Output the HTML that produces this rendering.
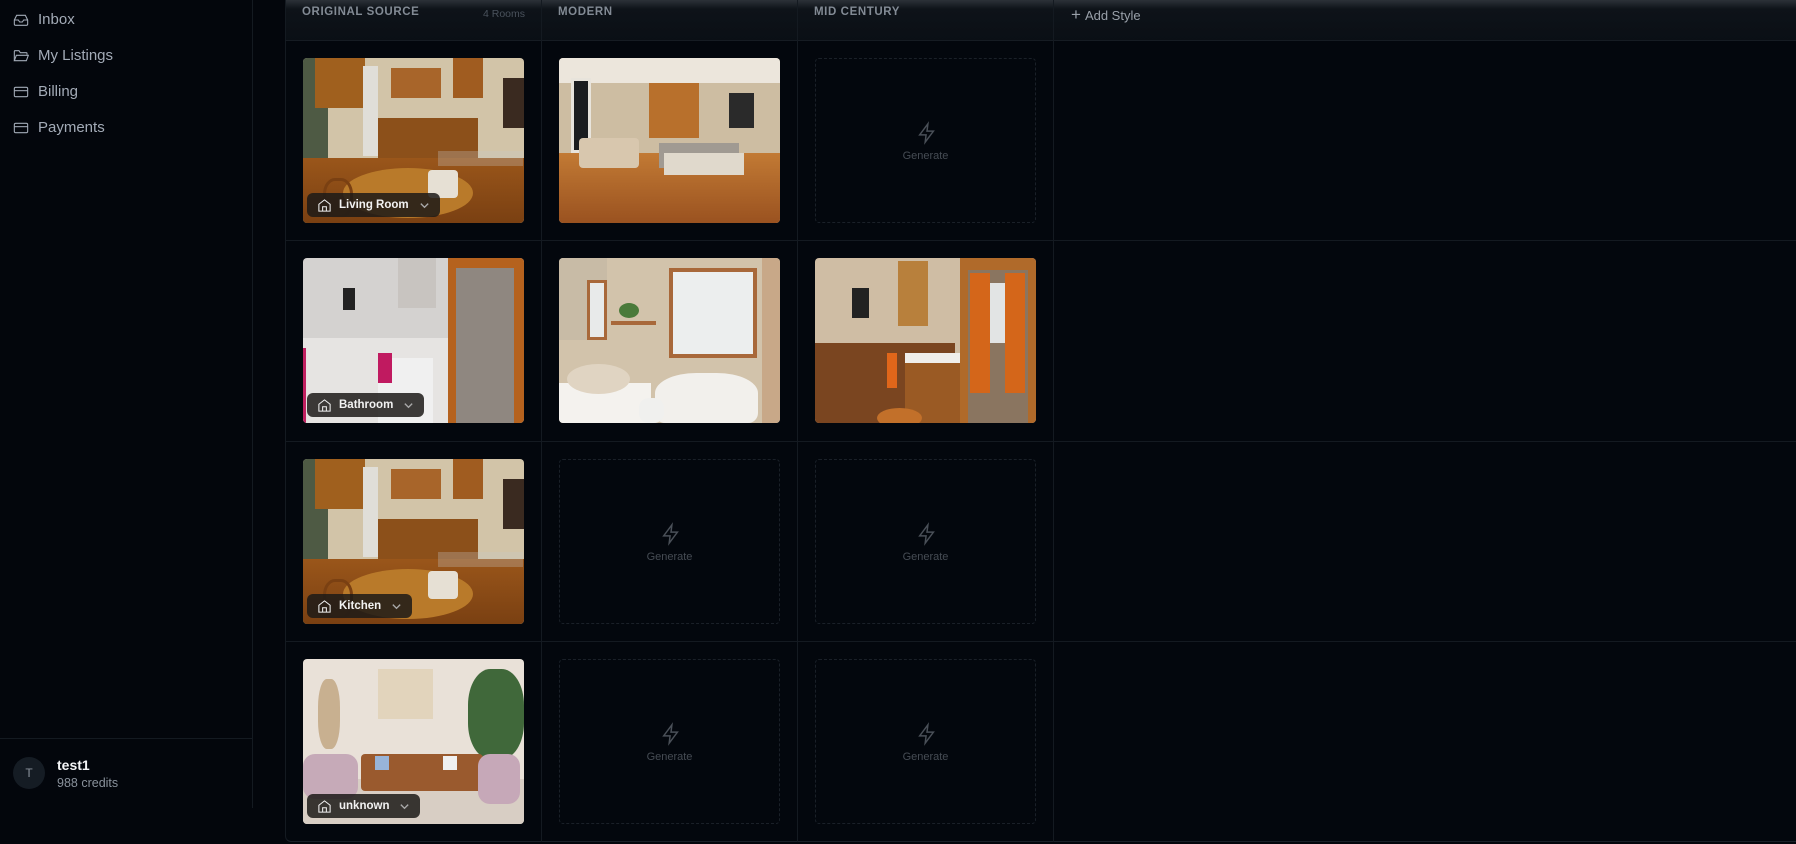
<!DOCTYPE html>
<html><head><meta charset="utf-8"><style>
*{box-sizing:border-box;margin:0;padding:0}
body{width:1796px;height:844px;background:#03060c;font-family:"Liberation Sans",sans-serif;position:relative;overflow:hidden}
.a{position:absolute}
.nav{position:absolute;left:13px;display:flex;align-items:center;color:#a3abb7;font-size:15px}
.nav svg{width:16px;height:16px;margin-right:9px;stroke:#a3abb7;fill:none;stroke-width:1.6}
.hd{position:absolute;top:6px;font-size:11.5px;font-weight:bold;letter-spacing:0.6px;color:#838b95}
.vl{position:absolute;top:0;width:1px;height:842px;background:#141a21}
.hl{position:absolute;left:285px;width:1511px;height:1px;background:#141a21}
.img{position:absolute;width:221px;height:165px;border-radius:4px;overflow:hidden}
.img div{position:absolute}
.box{position:absolute;width:221px;height:165px;border:1px dashed #1a2028;border-radius:4px}
.box svg{position:absolute;left:100px;top:62px;width:22px;height:24px;fill:none;stroke:#4a5058;stroke-width:1.6}
.box span{position:absolute;left:0;width:100%;top:91px;text-align:center;font-size:11px;color:#464c54}
.badge{position:absolute;left:4px;bottom:6px;height:24px;background:rgba(28,26,24,.85);border-radius:6px;display:flex;align-items:center;padding:0 10px 0 10px;color:#f2f2f2;font-size:11.5px;font-weight:bold}
.badge svg.h{width:15px;height:15px;stroke:#eee;fill:none;stroke-width:1.7;margin-right:7px}
.badge svg.c{width:11px;height:11px;stroke:#aaa;fill:none;stroke-width:1.5;margin-left:10px}
</style></head><body>

<div class="a" style="left:252px;top:0;width:1px;height:808px;background:#141a21"></div>
<div class="nav" style="top:11px"><svg viewBox="0 0 24 24"><path d="M22 12h-6l-2 3h-4l-2-3H2"/><path d="M5.5 5h13L22 12v6a2 2 0 0 1-2 2H4a2 2 0 0 1-2-2v-6z"/></svg>Inbox</div>
<div class="nav" style="top:47px"><svg viewBox="0 0 24 24"><path d="M2 19V5a1 1 0 0 1 1-1h6l2 3h9a1 1 0 0 1 1 1v2"/><path d="M2 19l3-8h18l-3 8z"/></svg>My Listings</div>
<div class="nav" style="top:83px"><svg viewBox="0 0 24 24"><rect x="2" y="5" width="20" height="14" rx="2"/><path d="M2 10h20"/></svg>Billing</div>
<div class="nav" style="top:119px"><svg viewBox="0 0 24 24"><rect x="2" y="5" width="20" height="14" rx="2"/><path d="M2 10h20"/></svg>Payments</div>
<div class="a" style="left:0;top:738px;width:252px;height:1px;background:#141a21"></div>
<div class="a" style="left:13px;top:757px;width:32px;height:32px;border-radius:50%;background:#151c24;color:#8a929c;font-size:12px;text-align:center;line-height:32px">T</div>
<div class="a" style="left:57px;top:757px;font-size:14px;font-weight:bold;color:#f4f5f7">test1</div>
<div class="a" style="left:57px;top:776px;font-size:12.5px;color:#8a929c">988 credits</div>

<div class="a" style="left:285px;top:0;width:1511px;height:842px;background:#03070d;border-left:1px solid #141a21;border-bottom:1px solid #1a2129;border-radius:0 0 0 6px"></div>
<div class="a" style="left:286px;top:0;width:1510px;height:41px;background:linear-gradient(#2c3138,#0e1319 9px,#0a0f15)"></div>
<div class="hl" style="top:40px;background:#161c23"></div>
<div class="hl" style="top:240px"></div>
<div class="hl" style="top:441px"></div>
<div class="hl" style="top:641px"></div>
<div class="vl" style="left:541px"></div>
<div class="vl" style="left:797px"></div>
<div class="vl" style="left:1053px"></div>
<div class="hd" style="left:302px">ORIGINAL SOURCE</div>
<div class="a" style="left:470px;top:8px;font-size:10.5px;color:#4a525c;width:55px;text-align:right">4 Rooms</div>
<div class="hd" style="left:558px">MODERN</div>
<div class="hd" style="left:814px">MID CENTURY</div>
<div class="a" style="left:1071px;top:5px;font-size:13px;color:#99a0a9;display:flex;align-items:center"><span style="font-size:17px;margin-right:4px;font-weight:normal">+</span>Add Style</div>

<div class="img" style="left:303px;top:58px;background:#d2c4a8">
 <div style="left:0;top:0;width:25px;height:165px;background:#4e5a44"></div>
 <div style="left:12px;top:0;width:50px;height:50px;background:#a0601e"></div>
 <div style="left:60px;top:8px;width:15px;height:90px;background:#e0ded8"></div>
 <div style="left:88px;top:10px;width:50px;height:30px;background:#a8652a"></div>
 <div style="left:150px;top:0;width:30px;height:40px;background:#a05c20"></div>
 <div style="left:75px;top:60px;width:100px;height:40px;background:#8c501a"></div>
 <div style="left:200px;top:20px;width:21px;height:50px;background:#3a2a20"></div>
 <div style="left:0;top:100px;width:221px;height:65px;background:linear-gradient(#9a561a,#7a4012)"></div>
 <div style="left:40px;top:110px;width:130px;height:50px;border-radius:50%;background:#b97a2a"></div>
 <div style="left:20px;top:120px;width:30px;height:40px;border-radius:40%;border:3px solid #7a4012"></div>
 <div style="left:125px;top:112px;width:30px;height:28px;background:#e6e0d4;border-radius:4px"></div>
 <div style="left:135px;top:93px;width:85px;height:15px;background:rgba(200,200,200,.3)"></div>
 <div class="badge"><svg class="h" viewBox="0 0 24 24"><path d="M3 10l9-7 9 7v11H3z"/><path d="M9 21v-7h6v7"/></svg>Living Room<svg class="c" viewBox="0 0 12 12"><path d="M2 4l4 4 4-4"/></svg></div>
</div>
<div class="img" style="left:559px;top:58px;background:#cdbda2">
 <div style="left:0;top:0;width:221px;height:25px;background:#ece6dc"></div>
 <div style="left:12px;top:20px;width:20px;height:75px;background:#1b1d1f;border:3px solid #e8e4dc"></div>
 <div style="left:90px;top:25px;width:50px;height:55px;background:#b8702c"></div>
 <div style="left:170px;top:35px;width:25px;height:35px;background:#2a2a2a"></div>
 <div style="left:0;top:95px;width:221px;height:70px;background:linear-gradient(#c27a34,#9a5220)"></div>
 <div style="left:100px;top:85px;width:80px;height:25px;background:#a09a92"></div>
 <div style="left:20px;top:80px;width:60px;height:30px;background:#d8c7ae;border-radius:4px"></div>
 <div style="left:105px;top:95px;width:80px;height:22px;background:#e0d9cc"></div>
</div>
<div class="box" style="left:815px;top:58px"><svg viewBox="0 0 24 24"><path d="M13 2L4 14h7l-1 8 9-12h-7z"/></svg><span>Generate</span></div>

<div class="img" style="left:303px;top:258px;background:#d4d2d0">
 <div style="left:0;top:80px;width:150px;height:85px;background:#e6e4e2"></div>
 <div style="left:0;top:90px;width:3px;height:75px;background:#c02060"></div>
 <div style="left:95px;top:0;width:38px;height:50px;background:#c8c4c0"></div>
 <div style="left:75px;top:100px;width:55px;height:65px;background:#f0f0f0"></div>
 <div style="left:75px;top:95px;width:14px;height:30px;background:#c01a60"></div>
 <div style="left:145px;top:0;width:76px;height:165px;background:#b5621e"></div>
 <div style="left:153px;top:10px;width:58px;height:155px;background:#8f8780"></div>
 <div style="left:40px;top:30px;width:12px;height:22px;background:#222"></div>
 <div class="badge"><svg class="h" viewBox="0 0 24 24"><path d="M3 10l9-7 9 7v11H3z"/><path d="M9 21v-7h6v7"/></svg>Bathroom<svg class="c" viewBox="0 0 12 12"><path d="M2 4l4 4 4-4"/></svg></div>
</div>
<div class="img" style="left:559px;top:258px;background:#d2c3ab">
 <div style="left:0;top:0;width:48px;height:82px;background:#c8bba6"></div>
 <div style="left:28px;top:22px;width:20px;height:60px;background:#e8eaea;border:3px solid #a8683a"></div>
 <div style="left:110px;top:10px;width:88px;height:90px;background:#eceeee;border:4px solid #a8683a"></div>
 <div style="left:52px;top:63px;width:45px;height:4px;background:#a8683a"></div>
 <div style="left:60px;top:45px;width:20px;height:15px;background:#4a7a3a;border-radius:50%"></div>
 <div style="left:0;top:125px;width:92px;height:40px;background:#f4f2ee"></div>
 <div style="left:8px;top:106px;width:63px;height:30px;border-radius:50%;background:#e0d4c2"></div>
 <div style="left:96px;top:115px;width:103px;height:50px;border-radius:40% 40% 10px 10px;background:#f2f0ec"></div>
 <div style="left:80px;top:140px;width:25px;height:25px;border-radius:40%;background:#f0f0ee"></div>
 <div style="left:203px;top:0;width:18px;height:165px;background:#c8a888"></div>
</div>
<div class="img" style="left:815px;top:258px;background:#cfbda4">
 <div style="left:0;top:85px;width:140px;height:80px;background:#7a4520"></div>
 <div style="left:83px;top:3px;width:30px;height:65px;background:#b8803c"></div>
 <div style="left:90px;top:100px;width:55px;height:65px;background:#9a5a24"></div>
 <div style="left:90px;top:95px;width:55px;height:10px;background:#f0eeea"></div>
 <div style="left:72px;top:95px;width:10px;height:35px;background:#e0661a"></div>
 <div style="left:145px;top:0;width:76px;height:165px;background:#b06a2a"></div>
 <div style="left:153px;top:12px;width:60px;height:153px;background:#8a7560"></div>
 <div style="left:155px;top:15px;width:20px;height:120px;background:#d4661a"></div>
 <div style="left:190px;top:15px;width:20px;height:120px;background:#d4661a"></div>
 <div style="left:175px;top:25px;width:15px;height:60px;background:#e2e4e4"></div>
 <div style="left:37px;top:30px;width:17px;height:30px;background:#222"></div>
 <div style="left:62px;top:150px;width:45px;height:20px;border-radius:50%;background:#c2702a"></div>
</div>

<div class="img" style="left:303px;top:459px;background:#d2c4a8">
 <div style="left:0;top:0;width:25px;height:165px;background:#4e5a44"></div>
 <div style="left:12px;top:0;width:50px;height:50px;background:#a0601e"></div>
 <div style="left:60px;top:8px;width:15px;height:90px;background:#e0ded8"></div>
 <div style="left:88px;top:10px;width:50px;height:30px;background:#a8652a"></div>
 <div style="left:150px;top:0;width:30px;height:40px;background:#a05c20"></div>
 <div style="left:75px;top:60px;width:100px;height:40px;background:#8c501a"></div>
 <div style="left:200px;top:20px;width:21px;height:50px;background:#3a2a20"></div>
 <div style="left:0;top:100px;width:221px;height:65px;background:linear-gradient(#9a561a,#7a4012)"></div>
 <div style="left:40px;top:110px;width:130px;height:50px;border-radius:50%;background:#b97a2a"></div>
 <div style="left:20px;top:120px;width:30px;height:40px;border-radius:40%;border:3px solid #7a4012"></div>
 <div style="left:125px;top:112px;width:30px;height:28px;background:#e6e0d4;border-radius:4px"></div>
 <div style="left:135px;top:93px;width:85px;height:15px;background:rgba(200,200,200,.3)"></div>
 <div class="badge"><svg class="h" viewBox="0 0 24 24"><path d="M3 10l9-7 9 7v11H3z"/><path d="M9 21v-7h6v7"/></svg>Kitchen<svg class="c" viewBox="0 0 12 12"><path d="M2 4l4 4 4-4"/></svg></div>
</div>
<div class="box" style="left:559px;top:459px"><svg viewBox="0 0 24 24"><path d="M13 2L4 14h7l-1 8 9-12h-7z"/></svg><span>Generate</span></div>
<div class="box" style="left:815px;top:459px"><svg viewBox="0 0 24 24"><path d="M13 2L4 14h7l-1 8 9-12h-7z"/></svg><span>Generate</span></div>

<div class="img" style="left:303px;top:659px;background:#e9e1d8">
 <div style="left:75px;top:10px;width:55px;height:50px;background:#e2d4bc"></div>
 <div style="left:165px;top:10px;width:56px;height:90px;background:#40683a;border-radius:40%"></div>
 <div style="left:15px;top:20px;width:22px;height:70px;background:#c8b090;border-radius:40%"></div>
 <div style="left:0;top:120px;width:221px;height:45px;background:#d8cec4"></div>
 <div style="left:58px;top:95px;width:122px;height:37px;background:#9a5a2e;border-radius:4px"></div>
 <div style="left:72px;top:97px;width:14px;height:14px;background:#98b4d8"></div>
 <div style="left:140px;top:97px;width:14px;height:14px;background:#f0f0f0"></div>
 <div style="left:0;top:95px;width:55px;height:45px;background:#c6aab8;border-radius:12px"></div>
 <div style="left:175px;top:95px;width:42px;height:50px;background:#c6a8b8;border-radius:12px"></div>
 <div class="badge"><svg class="h" viewBox="0 0 24 24"><path d="M3 10l9-7 9 7v11H3z"/><path d="M9 21v-7h6v7"/></svg>unknown<svg class="c" viewBox="0 0 12 12"><path d="M2 4l4 4 4-4"/></svg></div>
</div>
<div class="box" style="left:559px;top:659px"><svg viewBox="0 0 24 24"><path d="M13 2L4 14h7l-1 8 9-12h-7z"/></svg><span>Generate</span></div>
<div class="box" style="left:815px;top:659px"><svg viewBox="0 0 24 24"><path d="M13 2L4 14h7l-1 8 9-12h-7z"/></svg><span>Generate</span></div>

</body></html>
